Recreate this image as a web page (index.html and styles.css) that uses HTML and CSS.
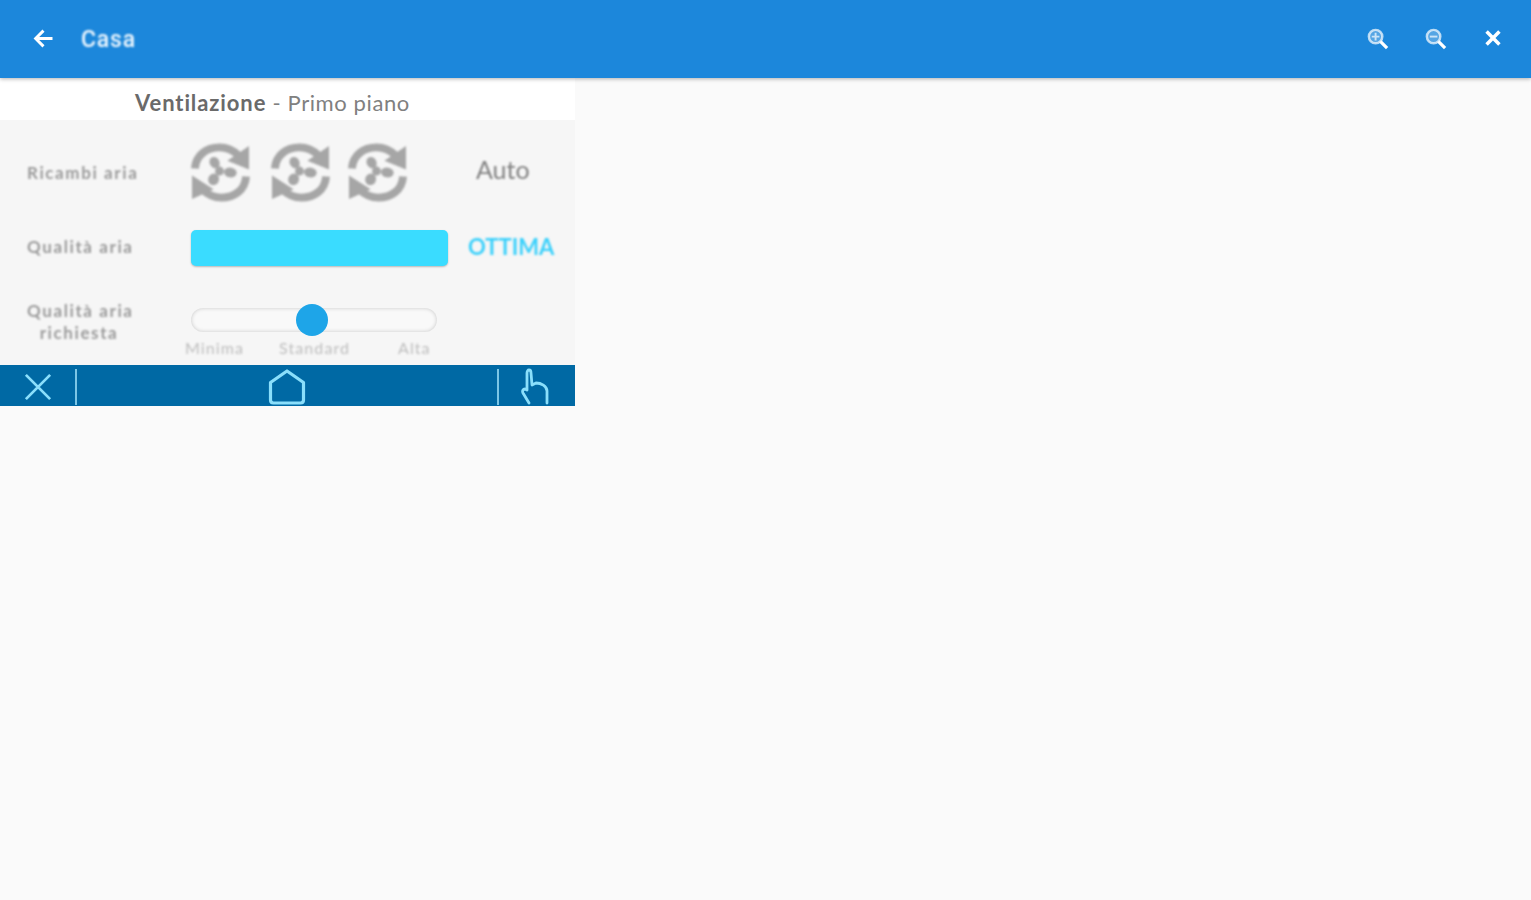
FILE: index.html
```html
<!DOCTYPE html>
<html lang="it">
<head>
<meta charset="utf-8">
<title>Casa</title>
<link rel="stylesheet" href="styles.css">
</head>
<body>
<svg class="defs" width="0" height="0" aria-hidden="true">
  <symbol id="fan" viewBox="0 0 60 60">
    <path d="M4 26C5 12 16 4.500 29 4.500c7 0 13 2 19 8" fill="none" stroke="currentColor" stroke-width="8"/>
    <path d="M59 3v24l-22-9z" fill="currentColor"/>
    <path d="M56 34C55 48 44 55.500 31 55.500c-7 0-13-2-19-8" fill="none" stroke="currentColor" stroke-width="8"/>
    <path d="M1 33v24l22-10z" fill="currentColor"/>
    <ellipse cx="24" cy="20" rx="5" ry="6" transform="rotate(-30 24 20)" fill="currentColor"/>
    <ellipse cx="40" cy="30" rx="6.500" ry="5" transform="rotate(10 40 30)" fill="currentColor"/>
    <ellipse cx="23" cy="37" rx="5.500" ry="6" transform="rotate(25 23 37)" fill="currentColor"/>
    <circle cx="29" cy="28.500" r="4.500" fill="currentColor"/>
  </symbol>
</svg>
<header class="topbar">
  <svg class="icon back" viewBox="0 0 24 24"><path d="M20 12H6M12 5l-7 7 7 7" fill="none" stroke="currentColor" stroke-width="2.6"/></svg>
  <span class="top-title">Casa</span>
  <span class="top-actions">
    <svg class="icon zoom" viewBox="0 0 24 24"><circle cx="10" cy="10" r="7" fill="#fff" fill-opacity=".25" stroke="currentColor" stroke-width="2.600" stroke-opacity=".7"/><path d="M6 10h8M10 6v8" stroke="currentColor" stroke-width="2" opacity=".7"/><path d="M15 15l7 7" stroke="currentColor" stroke-width="3.400"/></svg>
    <svg class="icon zoom" viewBox="0 0 24 24"><circle cx="10" cy="10" r="7" fill="#fff" fill-opacity=".25" stroke="currentColor" stroke-width="2.600" stroke-opacity=".7"/><path d="M6 10h8" stroke="currentColor" stroke-width="2" opacity=".7"/><path d="M15 15l7 7" stroke="currentColor" stroke-width="3.400"/></svg>
    <svg class="icon close" viewBox="0 0 24 24"><path d="M5 5l14 14M19 5L5 19" stroke="currentColor" stroke-width="3.800"/></svg>
  </span>
</header>
<main class="panel">
  <h1 class="panel-title"><b>Ventilazione</b> - Primo piano</h1>
  <div class="panel-body">
    <div class="row row-fan">
      <span class="label">Ricambi aria</span>
      <div class="fans">
        <svg class="fan"><use href="#fan"/></svg>
        <svg class="fan"><use href="#fan"/></svg>
        <svg class="fan"><use href="#fan"/></svg>
      </div>
      <span class="auto">Auto</span>
    </div>
    <div class="row row-quality">
      <span class="label">Qualità aria</span>
      <div class="quality-bar"></div>
      <span class="quality-text">OTTIMA</span>
    </div>
    <div class="row row-slider">
      <span class="label">Qualità aria<br>richiesta</span>
      <div class="slider">
        <div class="track"><span class="thumb"></span></div>
        <div class="ticks"><span>Minima</span><span>Standard</span><span>Alta</span></div>
      </div>
    </div>
  </div>
  <nav class="bottom">
    <div class="cell cell-close">
      <svg class="b-x" viewBox="0 0 30 30"><path d="M2 2l26 26M28 2L2 28" fill="none" stroke="currentColor" stroke-width="3"/></svg>
    </div>
    <div class="cell cell-home">
      <svg class="b-home" viewBox="0 0 38 36"><path d="M2.500 13.500L19 2l16.500 11.500V31q0 3-3 3H5.500q-3 0-3-3z" fill="none" stroke="currentColor" stroke-width="3.200" stroke-linejoin="round"/></svg>
    </div>
    <div class="cell cell-hand">
      <svg class="b-hand" viewBox="0 0 30 37"><path d="M6 22V5c0-4 4-4 4 0l1 12 4-2c5 0 11 3 11 8v12M6 22l-2-1c-2 0-3 2-2 4l6 10" fill="none" stroke="currentColor" stroke-width="2.800" stroke-linecap="round" stroke-linejoin="round"/></svg>
    </div>
  </nav>
</main>
</body>
</html>
```

FILE: styles.css
```css
* { box-sizing: border-box; }
html, body { margin: 0; height: 100%; }
body { background: #fafafa; font-family: "Lato", "Liberation Sans", sans-serif; overflow: hidden; }
.defs { position: absolute; }

.topbar {
  height: 78px;
  background: #1c87db;
  color: #fff;
  display: flex;
  align-items: center;
  padding: 0 27px 0 30px;
  box-shadow: 0 1px 4px rgba(0, 0, 0, .3);
  position: relative;
}
.icon { display: block; filter: blur(.7px); }
.back { width: 27px; height: 27px; margin-top: -2px; }
.top-title {
  margin-left: 24px;
  font: 500 23px "Roboto", sans-serif;
  filter: blur(.8px);
  margin-top: 1px;
  letter-spacing: .8px;
  color: #eef7fe;
}
.top-actions { margin-left: auto; display: flex; align-items: center; gap: 35px; margin-top: -2px; }
.zoom { width: 23px; height: 23px; }
.close { width: 22px; height: 22px; }

.panel { width: 575px; }
.panel-title {
  margin: 0;
  height: 42px;
  background: #fff;
  padding: 0 30px 0 0;
  text-align: center;
  font-size: 22px;
  font-weight: 400;
  letter-spacing: .6px;
  line-height: 50px;
  color: #808080;
  overflow: hidden;
}
.panel-title b { color: #6a6a6a; font-weight: 700; letter-spacing: .9px; }

.panel-body {
  height: 245px;
  background: #f6f6f6;
  padding-top: 23px;
  display: flex;
  flex-direction: column;
}
.row { display: grid; grid-template-columns: 191px auto 1fr; align-items: center; }
.label {
  padding-left: 27px;
  width: 165px;
  font-size: 17px;
  font-weight: 700;
  letter-spacing: 1.600px;
  line-height: 21.500px;
  color: #9a9a9a;
  white-space: nowrap;
  filter: blur(.8px);
}
.row-slider .label { width: 131px; text-align: center; padding-left: 27px; }

.row-fan { height: 59px; }
.fans { display: flex; gap: 21px; width: 216px; }
.fans .fan:last-child { margin-left: -3px; }
.fan { width: 59px; height: 59px; color: #a6a6a6; filter: blur(.8px); }
.auto { padding-left: 69px; font-size: 25px; color: #808080; filter: blur(.8px); margin-top: -8px; }

.row-quality { height: 36px; margin-top: 28px; }
.row-quality .label { margin-top: -3px; }
.quality-bar {
  width: 257px;
  height: 36px;
  background: #3adcff;
  border-radius: 5px;
  box-shadow: 0 1px 2px rgba(0, 0, 0, .25);
  filter: blur(.7px);
}
.quality-text {
  padding-left: 20px;
  font-size: 22px;
  font-weight: 700;
  color: #3ad0fb;
  margin-top: -3px;
  filter: blur(.8px);
}

.row-slider { margin-top: 34px; height: 65px; align-items: start; }
.slider { width: 270px; padding-top: 8px; }
.track {
  position: relative;
  width: 246px;
  height: 24px;
  border-radius: 12px;
  background: #f9f9f9;
  box-shadow: inset 0 0 4px rgba(0, 0, 0, .2);
  filter: blur(.7px);
}
.thumb {
  position: absolute;
  left: 105px;
  top: -4px;
  width: 32px;
  height: 32px;
  border-radius: 50%;
  background: #1ea5e8;
}
.ticks {
  display: grid;
  grid-template-columns: 94px 119px auto;
  margin: 6px 0 0 -6px;
  font-size: 16px;
  letter-spacing: 1.100px;
  color: #bdbdbd;
  white-space: nowrap;
  filter: blur(.8px);
}

.bottom {
  height: 41px;
  background: #0069a4;
  color: #8adffb;
  display: grid;
  grid-template-columns: 77px 422px 1fr;
}
.cell { display: flex; align-items: center; justify-content: center; filter: blur(.6px); }
.cell-close, .cell-home { border-right: 2px solid #7cc6e6; margin: 4px 0 2px; }
.b-x { width: 28px; height: 28px; }
.b-home { width: 38px; height: 36px; }
.b-hand { width: 30px; height: 37px; margin-right: 3px; }
```
